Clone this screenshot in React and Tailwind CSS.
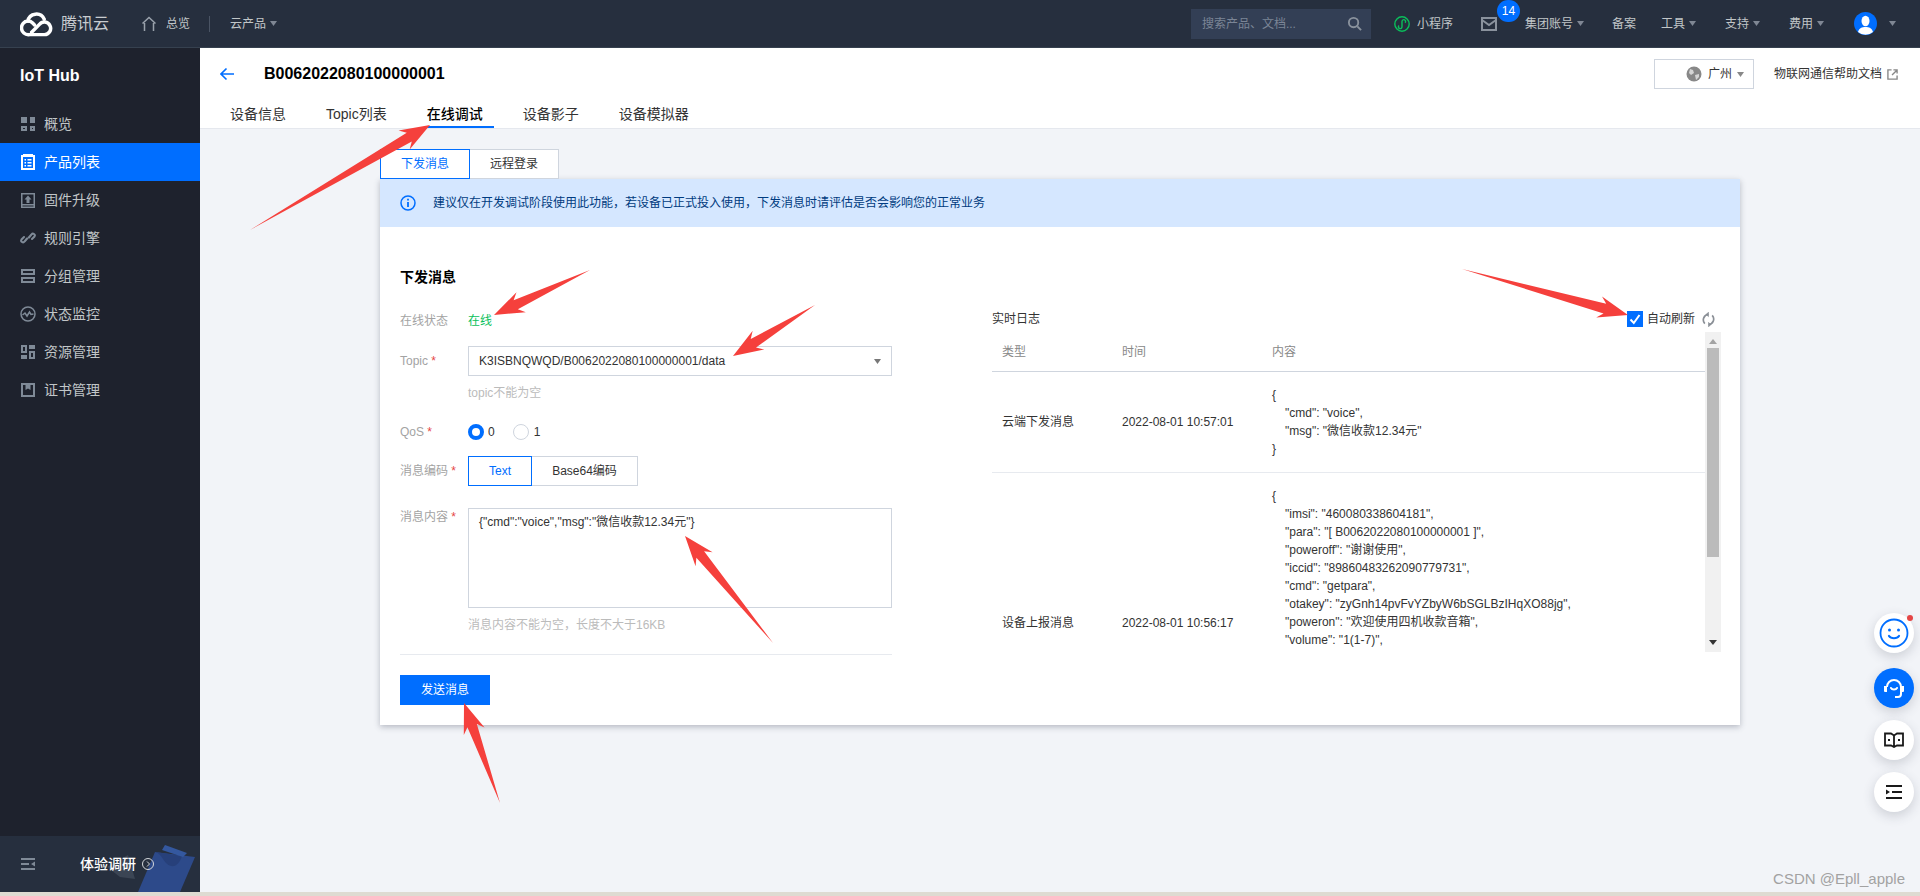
import { useState } from 'react';

const Caret = ({ className = 'fill-[#7f8794]' }) => (
  <svg width="7" height="5" viewBox="0 0 7 5" className={`shrink-0 ${className}`}><path d="M0 0h7L3.5 5z" /></svg>
);

const icon = 'w-4 h-4 shrink-0';

// Sidebar icons, drawn to match the console's own glyphs
const Icons = {
  overview: (
    <svg viewBox="0 0 16 16" className={icon} fill="currentColor"><path d="M1 1h6v6H1zM10 1h5v6h-5zM1 10h6v5H1zM10 10h5v5h-5z" /><path d="M3 12h2v1H3zM12 12h1v1h-1z" fill="#1e222d" /></svg>
  ),
  product: (
    <svg viewBox="0 0 16 16" className={icon} fill="currentColor"><path fillRule="evenodd" d="M1 1h2V0h10v1h2v15H1zM3 3v11h10V3z" /><path d="M4.5 5H6v1.5H4.5zM7.5 5h4v1.5h-4zM4.5 8H6v1.5H4.5zM7.5 8h4v1.5h-4zM4.5 11H6v1.5H4.5zM7.5 11h4v1.5h-4z" /></svg>
  ),
  firmware: (
    <svg viewBox="0 0 16 16" className={icon} fill="currentColor"><path fillRule="evenodd" d="M1 1h14v15H1zM2.5 2.500V12h11V2.500zM2.500 13.500V14.500h11V13.500z" /><path d="M8 3.500l3.500 4H9.500V11h-3V7.500H4.500z" /></svg>
  ),
  rule: (
    <svg viewBox="0 0 16 16" className={icon} fill="none" stroke="currentColor" strokeWidth="2" strokeLinecap="round"><path d="M7 8.500l-2.500 3a1.800 1.800 0 0 1-3-2l2.500-2.500" /><path d="M9 7.500l2.500-3a1.800 1.800 0 0 1 3 2L12 9" /><path d="M5 11l6-6" strokeOpacity="0.400" /></svg>
  ),
  group: (
    <svg viewBox="0 0 16 16" className={icon} fill="currentColor"><path fillRule="evenodd" d="M1 1h14v6H1zM3 3v2h10V3zM1 9h14v6H1zM3 11v2h10v-2z" /></svg>
  ),
  monitor: (
    <svg viewBox="0 0 16 16" className={icon} fill="none" stroke="currentColor"><circle cx="8" cy="8" r="7" strokeWidth="1.500" /><path d="M2.500 9l2.500-2 2 3 2.500-4 1.500 2.500 2.500-.5" strokeWidth="1.500" /></svg>
  ),
  resource: (
    <svg viewBox="0 0 16 16" className={icon} fill="currentColor"><path fillRule="evenodd" d="M1 1h6v8H1zM3 3v4h2V3z" /><path d="M9 1h6v4H9zM1 11h6v4H1z" /><path fillRule="evenodd" d="M9 7h6v8H9zM11 9v4h2V9z" /></svg>
  ),
  cert: (
    <svg viewBox="0 0 16 16" className={icon} fill="currentColor"><path fillRule="evenodd" d="M1 1h14v14H1zM3 3v10h10V3z" /><path d="M5.500 3h5v5L8 6.500 5.500 8z" /></svg>
  ),
};

const menu = [
  { label: '概览', icon: 'overview' },
  { label: '产品列表', icon: 'product', active: true },
  { label: '固件升级', icon: 'firmware' },
  { label: '规则引擎', icon: 'rule' },
  { label: '分组管理', icon: 'group' },
  { label: '状态监控', icon: 'monitor' },
  { label: '资源管理', icon: 'resource' },
  { label: '证书管理', icon: 'cert' },
];

const logs = [
  {
    type: '云端下发消息',
    time: '2022-08-01 10:57:01',
    height: 'h-[101px]',
    lines: ['{', '  "cmd": "voice",', '  "msg": "微信收款12.34元"', '}'],
  },
  {
    type: '设备上报消息',
    time: '2022-08-01 10:56:17',
    height: 'h-[300px]',
    lines: [
      '{',
      '  "imsi": "460080338604181",',
      '  "para": "[ B0062022080100000001 ]",',
      '  "poweroff": "谢谢使用",',
      '  "iccid": "89860483262090779731",',
      '  "cmd": "getpara",',
      '  "otakey": "zyGnh14pvFvYZbyW6bSGLBzIHqXO88jg",',
      '  "poweron": "欢迎使用四机收款音箱",',
      '  "volume": "1(1-7)",',
    ],
  },
];

// Red annotation arrows over the screenshot: thin tail, widening shaft, barbed head
const arrows = [
  [250, 230, 430, 125],
  [590, 270, 494, 315],
  [815, 305, 733, 356],
  [1462, 269, 1628, 315],
  [773, 643, 685, 536],
  [500, 803, 464, 703],
];

const arrowPoints = ([x1, y1, x2, y2]) => {
  const len = Math.hypot(x2 - x1, y2 - y1);
  const ux = (x2 - x1) / len;
  const uy = (y2 - y1) / len;
  const at = (a, b) => `${x1 + ux * a - uy * b},${y1 + uy * a + ux * b}`;
  return [
    at(0, 0),
    at(len - 24, 5),
    at(len - 30, 11),
    at(len, 0),
    at(len - 30, -11),
    at(len - 24, -5),
  ].join(' ');
};

const Label = ({ children, required }) => (
  <div className="w-[68px] shrink-0 text-xs leading-[18px] text-[#a3a3a3]">
    {children}
    {required && <span className="text-[#e54545]"> *</span>}
  </div>
);

const App = () => {
  const [autoRefresh, setAutoRefresh] = useState(true);

  return (
    <div className="relative flex h-screen w-full flex-col overflow-hidden bg-[#f2f4f8] text-xs text-[#333] [font-family:'Liberation_Sans','Noto_Sans_CJK_SC',sans-serif]">
      {/* Top bar */}
      <header className="flex h-12 shrink-0 items-center border-b border-[#36414f] bg-[#262f3e] pr-6 pl-5 text-[#c1c6c8]">
        <svg viewBox="0 0 34 30" className="h-[29px] w-[33px] shrink-0" fill="none" stroke="#fff" strokeWidth="3.600" strokeLinecap="round">
          <path d="M9 26.500a7 7 0 0 1-1-14 9 9 0 0 1 17-2" />
          <path d="M9 26.500h16a6.500 6.500 0 1 0-5-10.500l-8 8" />
          <path d="M8 12.500a7 7 0 0 1 5 2l2 2" />
        </svg>
        <span className="ml-2 text-base leading-6 text-[#c8ccd0]">腾讯云</span>
        <svg viewBox="0 0 16 16" className="ml-8 h-4 w-4 shrink-0" fill="none" stroke="#9aa2ac" strokeWidth="1.500"><path d="M1.500 7.500L8 1.500l6.500 6M3.500 15V7M12.500 15V7" /></svg>
        <span className="ml-[9px]">总览</span>
        <div className="ml-[19px] h-4 w-px bg-[#4a5464]" />
        <span className="ml-5">云产品</span>
        <span className="ml-1"><Caret /></span>

        <div className="ml-auto flex h-[30px] w-[180px] items-center justify-between bg-[#333f55] pr-[9px] pl-[11px] text-[#7b8596]">
          <span>搜索产品、文档...</span>
          <svg viewBox="0 0 16 16" className="h-[15px] w-[15px]" fill="none" stroke="#8a929d" strokeWidth="2"><circle cx="7" cy="7" r="5" /><path d="M11 11l4 4" /></svg>
        </div>
        <svg viewBox="0 0 16 16" className="ml-[23px] h-4 w-4 shrink-0" fill="none" stroke="#0abf5b" strokeWidth="1.400"><circle cx="8" cy="8" r="7.200" /><path d="M5 9.500a1.800 1.800 0 1 0 3 1.300V5.500a1.800 1.800 0 1 1 3 1.300" /></svg>
        <span className="ml-[7px]">小程序</span>
        <div className="relative ml-7 h-4 w-4 shrink-0">
          <svg viewBox="0 0 16 16" className="h-4 w-4" fill="none" stroke="#8a929d" strokeWidth="2"><path d="M1 2h14v12H1zM1 4l7 5 7-5" /></svg>
          <span className="absolute -top-[16px] left-4 flex h-[22px] w-[23px] items-center justify-center rounded-full bg-[#006eff] text-xs text-white">14</span>
        </div>
        <span className="ml-[28px]">集团账号</span>
        <span className="ml-1"><Caret /></span>
        <span className="ml-7">备案</span>
        <span className="ml-[25px]">工具</span>
        <span className="ml-1"><Caret /></span>
        <span className="ml-[29px]">支持</span>
        <span className="ml-1"><Caret /></span>
        <span className="ml-[29px]">费用</span>
        <span className="ml-1"><Caret /></span>
        <svg viewBox="0 0 23 23" className="ml-[30px] h-[23px] w-[23px] shrink-0"><circle cx="11.500" cy="11.500" r="11.500" fill="#006eff" /><ellipse cx="11.500" cy="9" rx="4" ry="5.200" fill="#fff" /><path d="M4 20c1-4 4-5 7.500-5s6.500 1 7.500 5a11.500 11.500 0 0 1-15 0z" fill="#fff" /></svg>
        <span className="ml-3"><Caret /></span>
      </header>

      <div className="flex min-h-0 flex-1">
        {/* Sidebar */}
        <aside className="flex w-[200px] shrink-0 flex-col bg-[#1e222d] text-sm text-[#c1c6c8]">
          <div className="h-[57px] pt-[17px] pl-5 text-base leading-[22px] font-bold text-white">IoT Hub</div>
          <nav className="flex flex-col">
            {menu.map((m) => (
              <div
                key={m.label}
                className={`flex h-[38px] items-center gap-[8px] pl-5 ${m.active ? 'bg-[#006eff] text-white' : ''}`}
              >
                <span className={m.active ? 'text-white' : 'text-[#7f8a97]'}>{Icons[m.icon]}</span>
                <span>{m.label}</span>
              </div>
            ))}
          </nav>
          <div className="relative mt-auto flex h-14 items-center overflow-hidden bg-[#262f3e] pl-[21px]">
            <svg viewBox="0 0 200 56" className="absolute inset-0 h-14 w-[200px]">
              <path d="M107 31l21-12 7 24-15-2z" fill="#3b4554" />
              <path d="M138 56l17-40 40 5-15 35z" fill="#2d4a8a" />
              <path d="M155 16c8 2 8 12 16 14 6 1 9-4 11-10z" fill="#27407a" />
              <path d="M162 14l3-5 22 8-4 4z" fill="#34589f" />
            </svg>
            <svg viewBox="0 0 14 12" className="relative h-3 w-[14px]" fill="#7f8a97"><path d="M0 0h14v2H0zM0 5h8v2H0zM0 10h14v2H0zM14 3.500v5L10 6z" /></svg>
            <span className="relative ml-[45px] font-medium text-white">体验调研</span>
            <svg viewBox="0 0 12 12" className="relative ml-[6px] h-3 w-3" fill="none" stroke="#d5d8dc"><circle cx="6" cy="6" r="5.500" /><path d="M5 3.500L7.500 6 5 8.500" /></svg>
          </div>
        </aside>

        <main className="flex min-w-0 flex-1 flex-col">
          {/* Page header */}
          <div className="h-[81px] shrink-0 border-b border-[#e5e8ee] bg-white">
            <div className="flex items-center pt-[11px] pr-[22px] pl-5">
              <svg viewBox="0 0 14 14" className="h-[14px] w-[14px]" fill="none" stroke="#006eff" strokeWidth="1.600"><path d="M14 7H1M6.500 1.500L1 7l5.500 5.500" /></svg>
              <h1 className="ml-[30px] text-base leading-[30px] font-bold text-black">B0062022080100000001</h1>
              <div className="ml-auto flex h-[30px] w-[100px] items-center border border-[#cfd5de] pl-[31px]">
                <svg viewBox="0 0 16 16" className="h-4 w-4 shrink-0" fill="#888"><circle cx="8" cy="8" r="7.500" /><path d="M4 3l3 1 1 3-3 2-2-2zM9 9l4-1 0 3-3 3z" fill="#fff" fillOpacity="0.650" /></svg>
                <span className="ml-[6px]">广州</span>
                <span className="ml-[5px]"><Caret className="fill-[#888]" /></span>
              </div>
              <span className="ml-5">物联网通信帮助文档</span>
              <svg viewBox="0 0 12 12" className="ml-[5px] h-[11px] w-[11px]" fill="none" stroke="#888" strokeWidth="1.500"><path d="M5 1H1v10h10V7M7 1h4v4M11 1L5.500 6.500" /></svg>
            </div>
            <div className="mt-[14px] flex gap-10 pl-[30px] text-sm leading-[22px] text-[#333]">
              <span>设备信息</span>
              <span>Topic列表</span>
              <span className="relative h-[25px] font-medium text-black">
                在线调试
                <span className="absolute -right-[11px] bottom-0 left-0 h-[2px] bg-[#006eff]" />
              </span>
              <span>设备影子</span>
              <span>设备模拟器</span>
            </div>
          </div>

          {/* Content */}
          <div className="pt-5 pl-[180px]">
            <div className="flex text-xs">
              <div className="flex h-[30px] w-[90px] items-center justify-center border border-[#006eff] bg-white text-[#006eff]">下发消息</div>
              <div className="flex h-[30px] w-[89px] items-center justify-center border border-l-0 border-[#cfd5de] bg-white">远程登录</div>
            </div>

            <section className="w-[1360px] bg-white shadow-[0_2px_6px_rgba(54,58,80,0.32)]">
              <div className="flex h-12 items-center bg-[#d5e7ff] pl-5 text-[#003b80]">
                <svg viewBox="0 0 16 16" className="h-4 w-4 shrink-0" fill="none" stroke="#006eff" strokeWidth="1.500"><circle cx="8" cy="8" r="7" /><path d="M8 7v5M8 3.800v1.600" strokeWidth="1.800" /></svg>
                <span className="ml-[17px]">建议仅在开发调试阶段使用此功能，若设备已正式投入使用，下发消息时请评估是否会影响您的正常业务</span>
              </div>

              <div className="flex pr-[19px] pb-5 pl-5">
                {/* Send form */}
                <div className="w-[492px] shrink-0 pt-[41px]">
                  <h2 className="text-sm leading-[18px] font-bold text-black">下发消息</h2>
                  <div className="mt-[26px] flex">
                    <Label>在线状态</Label>
                    <span className="leading-[18px] text-[#0abf5b]">在线</span>
                  </div>
                  <div className="mt-4 flex items-center">
                    <Label required>Topic</Label>
                    <div className="flex h-[30px] w-[424px] items-center justify-between border border-[#cfd5de] pr-[10px] pl-[10px]">
                      <span>K3ISBNQWQD/B0062022080100000001/data</span>
                      <Caret className="fill-[#777]" />
                    </div>
                  </div>
                  <div className="mt-2 ml-[68px] leading-[18px] text-[#bbb]">topic不能为空</div>
                  <div className="mt-[22px] flex h-4 items-center">
                    <Label required>QoS</Label>
                    <span className="h-4 w-4 rounded-full border-[4px] border-[#006eff] bg-white" />
                    <span className="ml-1">0</span>
                    <span className="ml-[18px] h-4 w-4 rounded-full border border-[#cfd5de]" />
                    <span className="ml-[5px]">1</span>
                  </div>
                  <div className="mt-4 flex items-center">
                    <Label required>消息编码</Label>
                    <div className="flex h-[30px] w-16 items-center justify-center border border-[#006eff] text-[#006eff]">Text</div>
                    <div className="flex h-[30px] w-[106px] items-center justify-center border border-l-0 border-[#cfd5de]">Base64编码</div>
                  </div>
                  <div className="mt-[22px] flex">
                    <Label required>消息内容</Label>
                    <div className="h-[100px] w-[424px] border border-[#cfd5de] px-[10px] py-[4px] leading-[18px]">
                      {'{"cmd":"voice","msg":"微信收款12.34元"}'}
                    </div>
                  </div>
                  <div className="mt-2 ml-[68px] leading-[18px] text-[#bbb]">消息内容不能为空，长度不大于16KB</div>
                  <div className="mt-5 h-px bg-[#e7eaef]" />
                  <button className="mt-5 block h-[30px] w-[90px] bg-[#006eff] text-xs text-white">发送消息</button>
                </div>

                {/* Realtime log */}
                <div className="ml-[100px] min-w-0 flex-1 pt-[84px]">
                  <div className="flex h-4 items-center pr-[6px]">
                    <span className="text-[#333]">实时日志</span>
                    <button
                      onClick={() => setAutoRefresh(!autoRefresh)}
                      className={`ml-auto flex h-4 w-4 items-center justify-center ${autoRefresh ? 'bg-[#006eff]' : 'border border-[#cfd5de]'}`}
                    >
                      {autoRefresh && (
                        <svg viewBox="0 0 12 12" className="h-3 w-3" fill="none" stroke="#fff" strokeWidth="2"><path d="M1.500 6.500L4.800 10l5.700-8" /></svg>
                      )}
                    </button>
                    <span className="ml-1">自动刷新</span>
                    <svg viewBox="0 0 14 16" className="ml-[7px] h-[15px] w-[13px]" fill="none" stroke="#8a8f96" strokeWidth="1.800"><path d="M3 12.500A6 6 0 0 1 7 2.500M11 3.500A6 6 0 0 1 7 13.500" /><path d="M7 0v5l-2.500-2.500zM7 16v-5l2.500 2.500z" fill="#8a8f96" strokeWidth="0.500" /></svg>
                  </div>

                  <div className="mt-[5px] flex h-[320px]">
                    <div className="min-w-0 flex-1 overflow-hidden">
                      <div className="grid h-10 grid-cols-[120px_150px_1fr] items-center border-b border-[#cfd5de] pl-[10px] text-[#888]">
                        <span>类型</span>
                        <span>时间</span>
                        <span>内容</span>
                      </div>
                      {logs.map((log) => (
                        <div
                          key={log.time}
                          className={`grid grid-cols-[120px_150px_1fr] items-start border-b border-[#e7eaef] pl-[10px] ${log.height}`}
                        >
                          <span className="self-center">{log.type}</span>
                          <span className="self-center">{log.time}</span>
                          <div className="pt-[14px]">
                            {log.lines.map((line, i) => (
                              <div key={i} className="leading-[18px] whitespace-pre-wrap">
                                {line.startsWith('  ') ? <span className="pl-[13px]">{line.trim()}</span> : line}
                              </div>
                            ))}
                          </div>
                        </div>
                      ))}
                    </div>
                    {/* Scrollbar */}
                    <div className="flex w-[16px] shrink-0 flex-col items-center bg-[#f1f1f1]">
                      <svg viewBox="0 0 8 5" className="mt-[7px] h-[5px] w-2 fill-[#a3a3a3]"><path d="M4 0l4 5H0z" /></svg>
                      <div className="mt-[4px] h-[209px] w-3 bg-[#bbb]" />
                      <svg viewBox="0 0 8 5" className="mt-auto mb-[7px] h-[5px] w-2 fill-[#333]"><path d="M0 0h8L4 5z" /></svg>
                    </div>
                  </div>
                </div>
              </div>
            </section>
          </div>
        </main>
      </div>
      <div className="h-1 shrink-0 bg-[#dedbd2]" />

      {/* Floating help buttons */}
      <div className="absolute top-[613px] right-[6px] flex flex-col items-center">
        <div className="relative flex h-10 w-10 items-center justify-center rounded-full bg-white shadow-[0_4px_12px_rgba(54,58,80,0.2)]">
          <svg viewBox="0 0 30 30" className="h-[30px] w-[30px]" fill="none" stroke="#006eff" strokeWidth="1.800"><circle cx="15" cy="15" r="13.500" /><circle cx="10.500" cy="12" r="1.500" fill="#006eff" stroke="none" /><circle cx="19.500" cy="12" r="1.500" fill="#006eff" stroke="none" /><path d="M10 18c2 3 8 3 10 0" strokeWidth="2.200" strokeLinecap="round" /></svg>
          <span className="absolute top-[2px] right-[1px] h-[6px] w-[6px] rounded-full bg-[#e54545]" />
        </div>
        <div className="mt-[15px] flex h-10 w-10 items-center justify-center rounded-full bg-[#006eff] shadow-[0_4px_12px_rgba(54,58,80,0.2)]">
          <svg viewBox="0 0 22 22" className="h-[22px] w-[22px]" fill="none" stroke="#fff" strokeWidth="2"><path d="M4 10a7 7 0 0 1 14 0v7a3 3 0 0 1-3 3h-3" /><path d="M8 11c1 2 5 2 6 0" strokeLinecap="round" /><path d="M1 9h3v6H2a1 1 0 0 1-1-1zM21 9h-3v6h2a1 1 0 0 0 1-1z" fill="#fff" stroke="none" /></svg>
        </div>
        <div className="mt-3 flex h-10 w-10 items-center justify-center rounded-full bg-white shadow-[0_4px_12px_rgba(54,58,80,0.2)]">
          <svg viewBox="0 0 20 16" className="h-4 w-5" fill="none" stroke="#1a1a1a" strokeWidth="1.800"><path d="M1 1.500h6l3 2 3-2h6v12h-6l-3 1.500-3-1.500H1zM10 3.500V15" /><path d="M4 7h2v2H4zM14 7h2v2h-2z" fill="#1a1a1a" stroke="none" /></svg>
        </div>
        <div className="mt-3 flex h-10 w-10 items-center justify-center rounded-full bg-white shadow-[0_4px_12px_rgba(54,58,80,0.2)]">
          <svg viewBox="0 0 16 14" className="h-[14px] w-4" fill="#1a1a1a"><path d="M0 0h16v2H0zM6 6h10v2H6zM0 12h16v2H0zM0 4.500v5L4 7z" /></svg>
        </div>
      </div>

      <div className="absolute right-[15px] bottom-[7px] text-[15px] leading-5 text-[#a2a2a2]">CSDN @Epll_apple</div>

      {/* Annotation arrows */}
      <svg className="pointer-events-none absolute inset-0 h-full w-full">
        {arrows.map((a) => (
          <polygon key={a.join()} points={arrowPoints(a)} fill="#f5403c" />
        ))}
      </svg>
    </div>
  );
};

export default App;
